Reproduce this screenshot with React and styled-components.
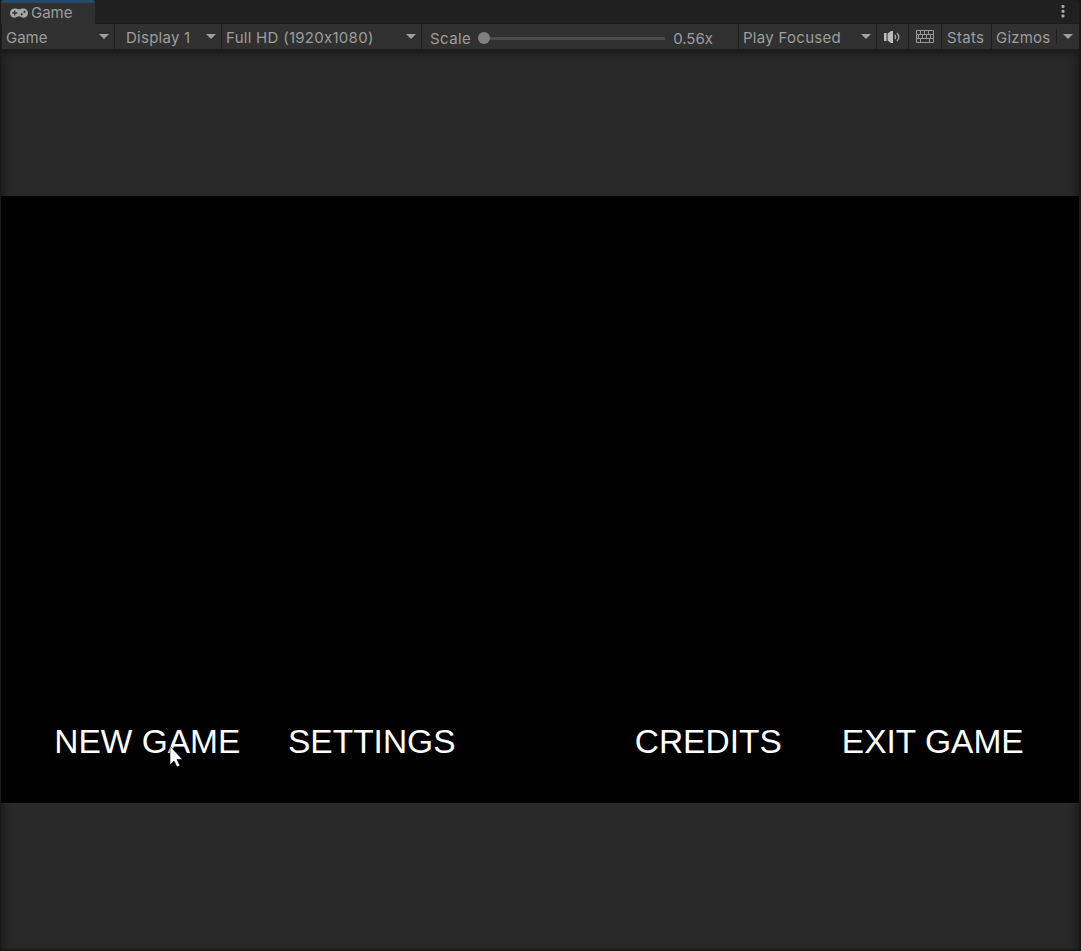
import React from 'react';
import styled, { createGlobalStyle } from 'styled-components';

const GlobalStyle = createGlobalStyle`
  * { box-sizing: border-box; }
  body { margin: 0; background: #191919; overflow: hidden; }
`;

const Window = styled.div`
  position: relative;
  display: flex;
  flex-direction: column;
  width: 1081px;
  height: 951px;
  padding: 0 2px 2px 1px;
  background: #191919;
  font-family: Inter, 'Liberation Sans', sans-serif;
  font-size: 15px;
  color: #9e9e9e;
`;

const TabBar = styled.div`
  display: flex;
  justify-content: space-between;
  flex: none;
  height: 24px;
  background: #202020;
  border-radius: 3px 5px 0 0;
  box-shadow: inset 0 -1px #1b1b1b;
`;

const Tab = styled.div`
  display: flex;
  align-items: center;
  width: 94px;
  height: 24px;
  padding-left: 9px;
  gap: 3px;
  background: #303030;
  border-top: 3px solid #23496b;
  border-radius: 3px 3px 0 0;
  svg { flex: none; margin-top: -1px; }
`;

const MenuButton = styled.div`
  display: flex;
  padding: 5px 14px 0 0;
`;

const Toolbar = styled.div`
  display: flex;
  flex: none;
  gap: 1px;
  height: 26px;
  padding: 0 0 1px 1px;
  background: #1c1c1c;
`;

const Cell = styled.div`
  display: flex;
  align-items: center;
  justify-content: ${(p) => p.$justify || 'space-between'};
  flex: none;
  width: ${(p) => p.$w}px;
  padding: 0 ${(p) => p.$right ?? 0}px 0 ${(p) => p.$left ?? 0}px;
  background: #303030;
  svg { flex: none; }
`;

const Label = styled.span`
  line-height: 20px;
  white-space: nowrap;
  letter-spacing: ${(p) => p.$spacing || 0}px;
  margin-top: ${(p) => p.$drop ?? 3}px;
`;

const Caret = styled.span`
  width: 0;
  height: 0;
  border: 5px solid transparent;
  border-top-color: #a0a0a0;
  border-bottom: 0;
`;

const Slider = styled.div`
  display: flex;
  align-items: center;
  width: 187px;
  margin: 3px 8px 0 7px;
`;

const Knob = styled.div`
  width: 12px;
  height: 12px;
  border-radius: 50%;
  background: #808080;
`;

const Track = styled.div`
  flex: 1;
  height: 3px;
  background: #4b4b4b;
`;

const Divider = styled.div`
  width: 1px;
  height: 15px;
  background: #1e1e1e;
`;

const Viewport = styled.div`
  display: flex;
  flex-direction: column;
  flex: 1;
  padding-top: 146px;
  background: #292929;
  box-shadow: inset 0 7px 8px -4px #191919, inset 6px 0 8px -5px #1b1b1b, inset -6px 0 8px -5px #1b1b1b;
`;

const Screen = styled.div`
  display: flex;
  align-items: flex-end;
  justify-content: space-between;
  height: 607px;
  padding: 0 34px 41px;
  background: #000;
`;

const MenuGroup = styled.div`
  display: flex;
`;

const MenuItem = styled.div`
  width: 224.5px;
  text-align: center;
  font: 33.5px/40px 'Liberation Sans', Arial, sans-serif;
  color: #fff;
`;

const Pointer = styled.svg`
  position: absolute;
  left: 169px;
  top: 745px;
`;

const Gamepad = () => (
  <svg width="18" height="12" viewBox="0 0 18 12">
    <path d="M5 1.6C6.800 1.600 6.900 2.200 9 2.200s2.200-.6 4-.6c3 0 5 2 5 4.500s-1.700 4.600-4.200 4.600C11.600 10.700 11.200 9.300 9 9.300S6.400 10.700 4.200 10.700C1.700 10.700 0 8.600 0 6.100s2-4.500 5-4.500Z" fill="#a8a8a8" />
    <path d="M2.200 6h5M4.700 3.500v5" stroke="#303030" strokeWidth="1.300" />
    <circle cx="11.700" cy="7.300" r="1.100" fill="#303030" />
    <circle cx="14.500" cy="4.900" r="1.100" fill="#303030" />
  </svg>
);

const Speaker = () => (
  <svg width="17" height="12" viewBox="0 0 17 12">
    <path d="M0 2h2.600v8H0ZM3.600 2.500 7 0h2v12H7L3.600 9.500Z" fill="#bcbcbc" />
    <path d="M10.800 4q1.600 2 0 4M13 1.800q3.600 4.200 0 8.400" fill="none" stroke="#aaa" strokeWidth="1.300" />
  </svg>
);

const Keyboard = () => (
  <svg width="18" height="13" viewBox="0 0 18 13" fill="none" stroke="#999">
    <path d="M.5 .5h17v12H.5ZM.5 4.500h17M.5 8.500h17M4.500 .5v4M8.500 .5v4M12.500 .5v4M2.500 4.500v4M6.500 4.500v4M10.500 4.500v4M14.500 4.500v4M4.500 8.500v4M13.500 8.500v4" />
  </svg>
);

const Dots = () => (
  <svg width="4" height="13" viewBox="0 0 4 13" fill="#a8a8a8">
    <rect x=".5" width="3" height="3" rx="1" />
    <rect x=".5" y="4.700" width="3" height="3" rx="1" />
    <rect x=".5" y="9.400" width="3" height="3" rx="1" />
  </svg>
);

export default function App() {
  return (
    <>
      <GlobalStyle />
      <Window>
        <TabBar>
          <Tab>
            <Gamepad />
            <Label $drop={-2}>Game</Label>
          </Tab>
          <MenuButton><Dots /></MenuButton>
        </TabBar>
        <Toolbar>
          <Cell $w={112} $left={4} $right={5.5}>
            <Label>Game</Label>
            <Caret />
          </Cell>
          <Cell $w={106} $left={11} $right={5.5}>
            <Label $spacing={0.25}>Display 1</Label>
            <Caret />
          </Cell>
          <Cell $w={199} $left={4} $right={5.5}>
            <Label $spacing={0.28}>Full HD (1920x1080)</Label>
            <Caret />
          </Cell>
          <Cell $w={316} $left={8} $justify="flex-start">
            <Label $spacing={0.4} $drop={5}>Scale</Label>
            <Slider><Knob /><Track /></Slider>
            <Label $drop={5}>0.56x</Label>
          </Cell>
          <Cell $w={137} $left={4} $right={5.5}>
            <Label $spacing={0.28}>Play Focused</Label>
            <Caret />
          </Cell>
          <Cell $w={31} $left={7} $justify="flex-start"><Speaker /></Cell>
          <Cell $w={32} $justify="center"><Keyboard /></Cell>
          <Cell $w={49} $left={5} $justify="flex-start"><Label $spacing={0.3}>Stats</Label></Cell>
          <Cell $w={87} $left={4} $right={5.5}>
            <Label $spacing={0.2}>Gizmos</Label>
            <Divider />
            <Caret />
          </Cell>
        </Toolbar>
        <Viewport>
          <Screen>
            <MenuGroup>
              <MenuItem>NEW GAME</MenuItem>
              <MenuItem>SETTINGS</MenuItem>
            </MenuGroup>
            <MenuGroup>
              <MenuItem>CREDITS</MenuItem>
              <MenuItem>EXIT GAME</MenuItem>
            </MenuGroup>
          </Screen>
        </Viewport>
        <Pointer width="15" height="24" viewBox="0 0 15 24">
          <path d="M1 1v19l4-4 3 6 3-1.500-3-6h5.500Z" fill="#fff" stroke="#000" strokeWidth=".6" />
        </Pointer>
      </Window>
    </>
  );
}
